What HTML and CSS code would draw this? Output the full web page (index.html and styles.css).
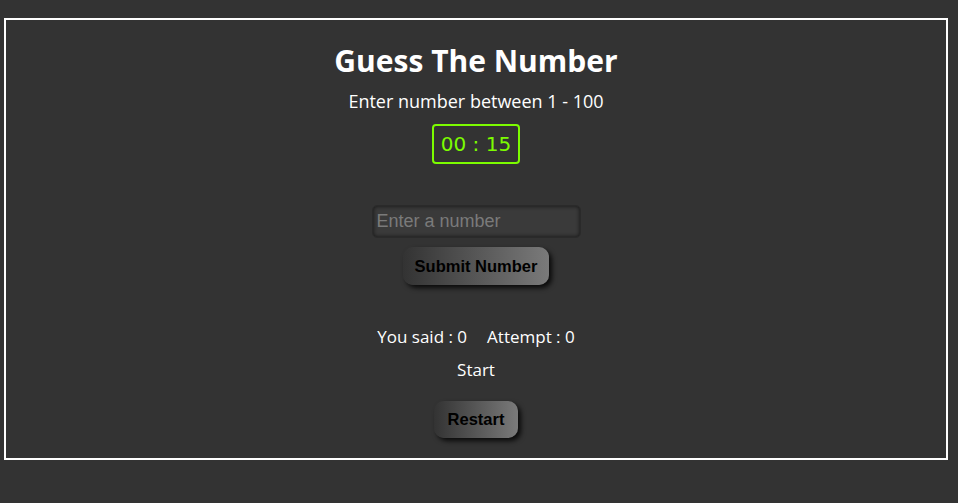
FILE: index.html
```html
<!DOCTYPE html>
<html>
<head>
<meta charset="utf-8">
<link rel="stylesheet" href="styles.css">
</head>
<body>
<div class="frame">
  <h1 class="title">Guess The Number</h1>
  <p class="subtitle">Enter number between 1 - 100</p>
  <div class="timer">00 : 15</div>
  <input class="guess" type="text" placeholder="Enter a number">
  <button class="btn submit">Submit Number</button>
  <div class="stats"><span>You said : 0</span><span>Attempt : 0</span></div>
  <div class="status">Start</div>
  <button class="btn restart">Restart</button>
</div>
</body>
</html>
```
FILE: styles.css
```css
html, body {
  margin: 0;
  padding: 0;
  background: #333333;
  height: 100%;
}
body {
  padding: 18px 10px 0 4px;
  box-sizing: border-box;
}
.frame {
  border: 2px solid #ffffff;
  height: 442px;
  box-sizing: border-box;
  display: flex;
  flex-direction: column;
  align-items: center;
  color: #ffffff;
  font-family: "Open Sans", "DejaVu Sans", sans-serif;
}
.title {
  margin: 21px 0 0;
  font-size: 30px;
  font-weight: 700;
  line-height: 40px;
}
.subtitle {
  margin: 8px 0 0;
  font-size: 18px;
  font-weight: 500;
  line-height: 24px;
}
.timer {
  margin-top: 11px;
  width: 88px;
  height: 40px;
  box-sizing: border-box;
  border: 2px solid #7cfc00;
  border-radius: 4px;
  color: #7cfc00;
  font-family: "DejaVu Sans", sans-serif;
  font-size: 20px;
  display: flex;
  align-items: center;
  justify-content: center;
}
.guess {
  margin-top: 41px;
  width: 209px;
  height: 33px;
  box-sizing: border-box;
  background: #3a3a3a;
  border: 1px solid #2a2a2a;
  border-radius: 5px;
  box-shadow: inset 0 0 4px rgba(0,0,0,0.7);
  padding: 0 4px;
  font-family: "Liberation Sans", Arial, sans-serif;
  font-size: 18px;
  color: #ddd;
  outline: none;
}
.guess::placeholder {
  color: #7a7a7a;
}
.btn {
  border: none;
  border-radius: 10px;
  background: linear-gradient(to right, #333333, #7a7a7a);
  box-shadow: 3px 3px 5px rgba(0,0,0,0.8);
  color: #000000;
  font-family: "Liberation Sans", Arial, sans-serif;
  font-weight: 700;
  font-size: 16.5px;
  padding: 0;
}
.submit {
  margin-top: 9px;
  width: 146px;
  height: 38px;
}
.stats {
  margin-top: 40px;
  display: flex;
  gap: 20px;
  font-size: 17px;
  font-weight: 500;
  line-height: 24px;
}
.status {
  margin-top: 9px;
  font-size: 17px;
  font-weight: 500;
  line-height: 24px;
}
.restart {
  margin-top: 19px;
  width: 84px;
  height: 37px;
}
```
